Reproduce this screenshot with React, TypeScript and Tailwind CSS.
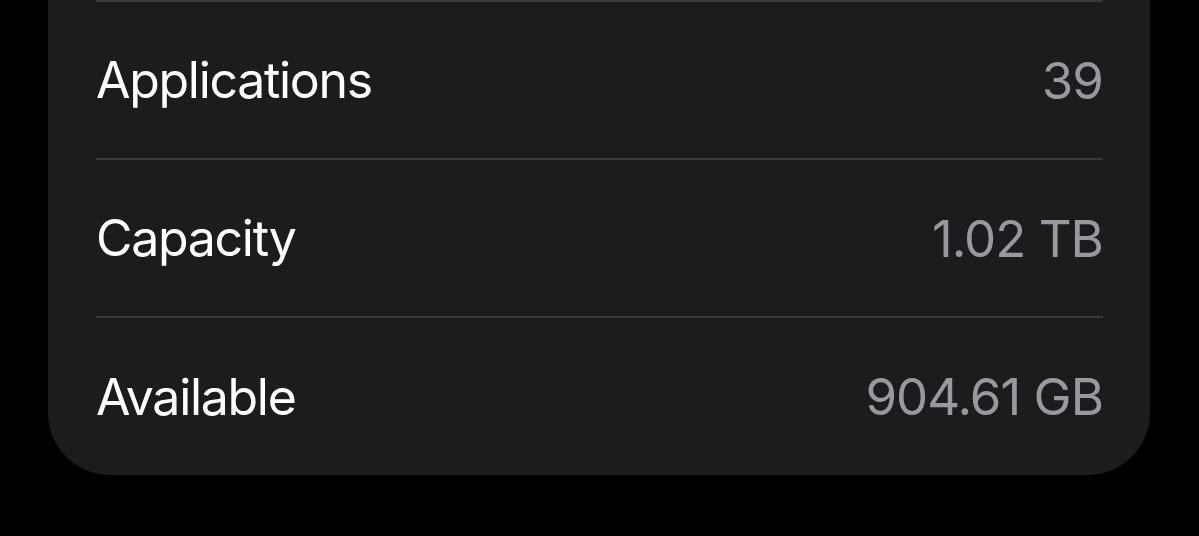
import React from 'react';

const rows = [
  { label: 'Applications', value: '39' },
  { label: 'Capacity', value: '1.02 TB' },
  { label: 'Available', value: '904.61 GB' },
];

export default function App() {
  return (
    <div className="h-[536px] w-[1199px] overflow-hidden bg-black pl-[48px] pr-[49px]" style={{ fontFamily: 'Inter, "Noto Sans", sans-serif' }}>
      <div className="rounded-b-[62px] bg-[#1c1c1e] pl-[48px] pr-[47px]">
        {rows.map((row, i) => (
          <div key={row.label}>
            {/* separator above each row */}
            <div className="h-[2px] bg-[#3a3a3c]" />
            <div className={`flex items-center justify-between ${i === rows.length - 1 ? 'h-[157px]' : 'h-[156px]'}`}>
              <span className="text-[50px] leading-none tracking-[-1.3px] text-white">{row.label}</span>
              <span className="text-[51px] leading-none tracking-[-1px] text-[#98989f]">{row.value}</span>
            </div>
          </div>
        ))}
      </div>
    </div>
  );
}
